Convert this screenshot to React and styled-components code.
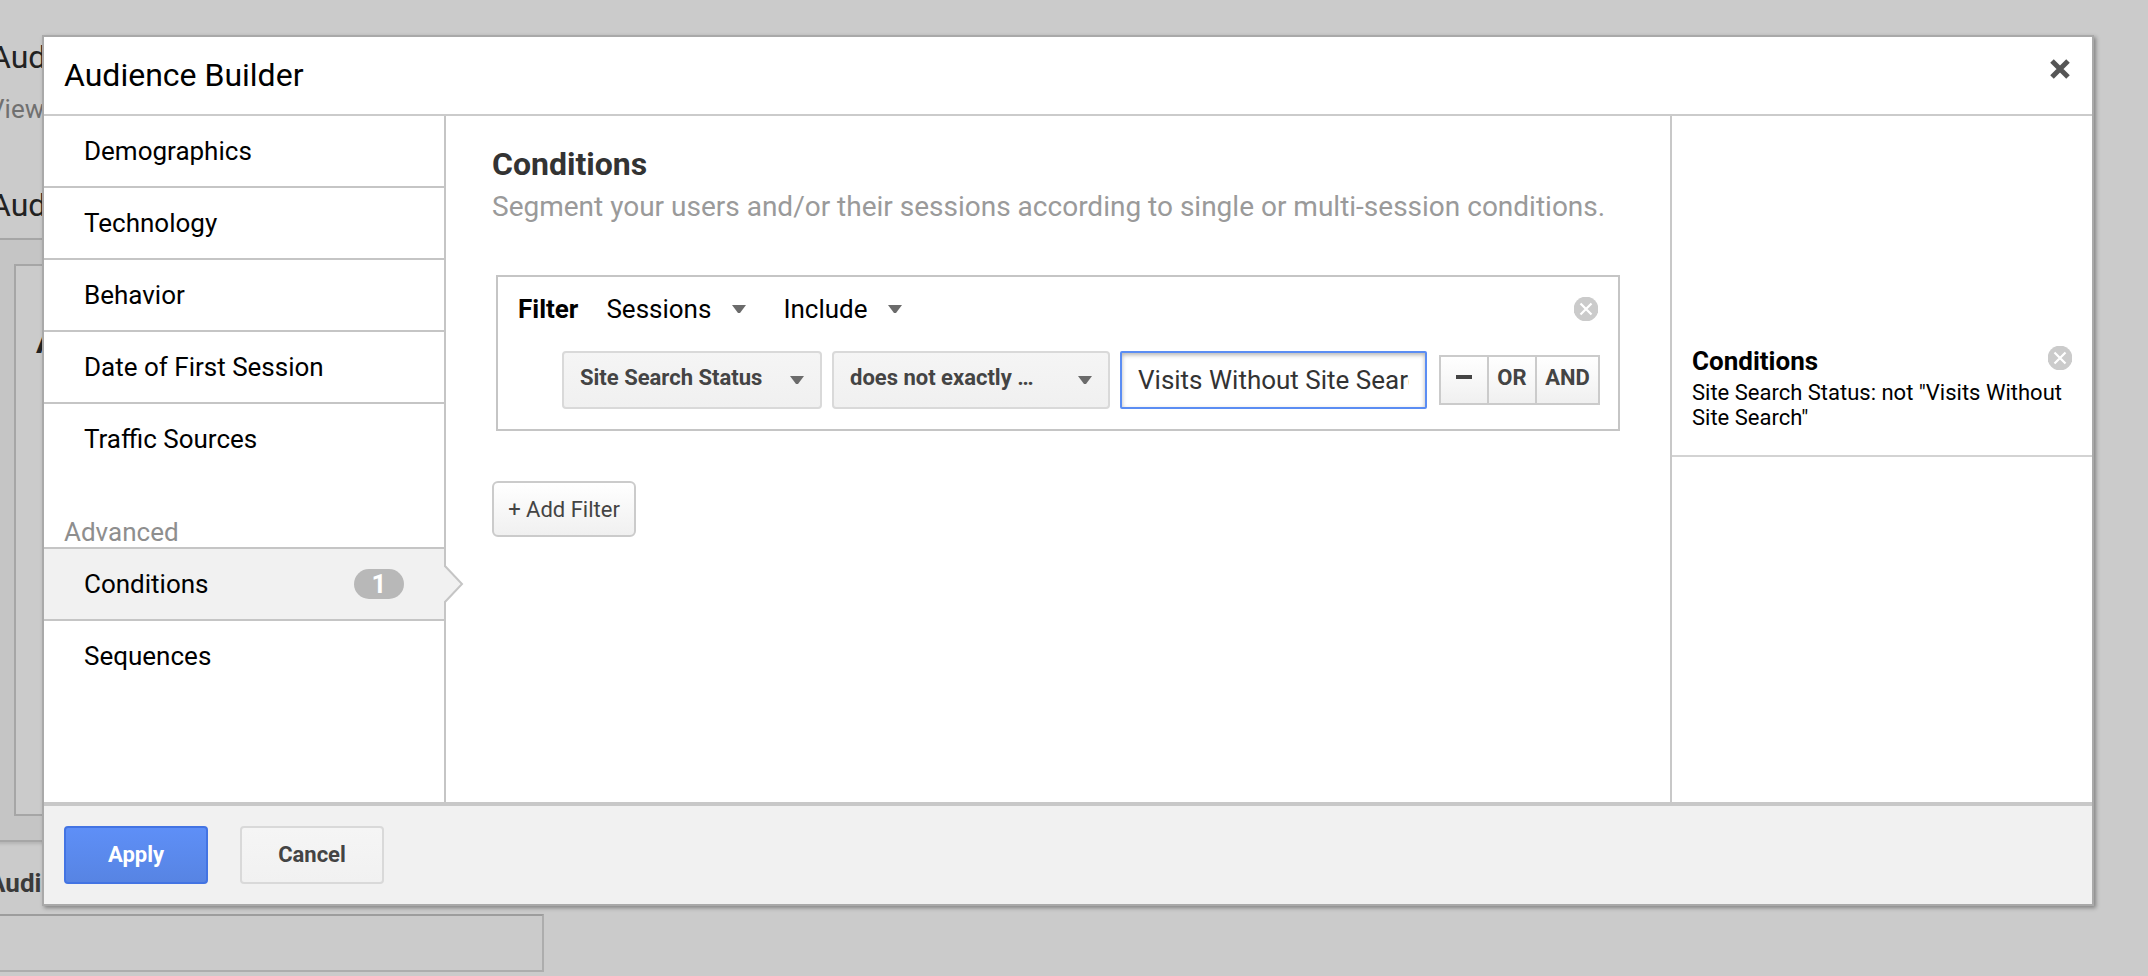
import React from "react";
import styled, { createGlobalStyle, css } from "styled-components";

const GlobalStyle = createGlobalStyle`
  *, *::before, *::after { box-sizing: border-box; }
  body {
    margin: 0;
    background: #cbcbcb;
    color: #000;
    font-family: Roboto, "Liberation Sans", sans-serif;
    font-size: 26px;
    line-height: 30px;
  }
  h1, h2, h3, p { margin: 0; }
  button, input, select { margin: 0; font-family: inherit; }
`;

/* ---------- page behind the dialog ---------- */

const Page = styled.div`
  min-height: 100vh;
  padding: 37px 72px 4px 0;
  margin-left: -12px;
  overflow: hidden;
`;

const PageHeading = styled.h2`
  padding-left: 2px;
  font-size: 32px;
  font-weight: 400;
  line-height: 40px;
  color: #222;
`;

const ViewName = styled.p`
  margin: 17px 0 61px;
  color: #707070;
`;

const PagePanel = styled.section`
  margin-top: 13px;
  padding: 24px 26px;
  border: solid #a6a6a6;
  border-width: 2px 0;
  background: #c5c5c5;
  box-shadow: 0 2px 3px rgba(0, 0, 0, 0.12);
`;

const PageCard = styled.div`
  min-height: 552px;
  padding: 58px 20px;
  border: 2px solid #a6a6a6;
  background: #cbcbcb;
  font-size: 32px;
  font-weight: 700;
  line-height: 36px;
  color: #222;
`;

const PageLabel = styled.label`
  display: block;
  margin: 26px 0 16px;
  font-weight: 700;
  color: #3a3a3a;
`;

const PageInput = styled.input`
  display: block;
  width: 556px;
  height: 58px;
  border: 2px solid #adadad;
  border-top-color: #9d9d9d;
  background: #cbcbcb;
`;

/* ---------- dialog frame ---------- */

const Overlay = styled.div`
  position: absolute;
  inset: 0;
  padding: 35px 54px 0 42px;
`;

const Dialog = styled.div`
  border: 2px solid #a9a9a9;
  background: #fff;
  box-shadow: 2px 2px 4px rgba(0, 0, 0, 0.35);
`;

const DialogHeader = styled.header`
  display: flex;
  justify-content: space-between;
  align-items: flex-start;
  padding: 18px 20px 19px;
  border-bottom: 2px solid #cbcbcb;
`;

const DialogTitle = styled.h1`
  font-size: 32px;
  font-weight: 400;
  line-height: 40px;
`;

const IconButton = styled.button`
  display: block;
  flex: none;
  width: 24px;
  height: 24px;
  padding: 0;
  border: 0;
  background: none;
  svg { display: block; }
`;

const CloseButton = styled(IconButton)`
  margin-top: 2px;
`;

const DialogBody = styled.div`
  display: flex;
`;

const DialogFooter = styled.footer`
  display: flex;
  gap: 32px;
  padding: 20px;
  border-top: 4px solid #c8c8c8;
  background: #f1f1f1;
`;

/* ---------- sidebar ---------- */

const Sidebar = styled.nav`
  flex: none;
  width: 402px;
  padding-bottom: 111px;
  border-right: 2px solid #c5c5c5;
`;

const NavList = styled.ul`
  margin: 0;
  padding: 0;
  list-style: none;
  li + li { border-top: 2px solid #c5c5c5; }
`;

const NavLink = styled.a`
  position: relative;
  display: flex;
  justify-content: space-between;
  align-items: center;
  height: 70px;
  padding: 0 40px;
  color: #000;
  text-decoration: none;
  ${({ $active }) => $active && css`background: #f1f1f1;`}
`;

const GroupLabel = styled.p`
  padding: 43px 20px 0;
  border-bottom: 2px solid #c5c5c5;
  color: #8e8e8e;
`;

const Badge = styled.span`
  width: 50px;
  border-radius: 15px;
  background: #b8b8b8;
  color: #fff;
  font-weight: 700;
  text-align: center;
`;

const Pointer = styled.svg`
  position: absolute;
  left: 100%;
  top: 16px;
`;

/* ---------- conditions editor ---------- */

const Main = styled.main`
  flex: 1;
  min-width: 0;
  padding: 28px 46px 0;
`;

const SectionTitle = styled.h2`
  font-size: 32px;
  line-height: 40px;
  color: #333;
`;

const Description = styled.p`
  margin-top: 7px;
  font-size: 28px;
  line-height: 32px;
  color: #9a9a9a;
`;

const FilterBox = styled.section`
  margin: 52px 4px 50px;
  padding: 17px 18px 20px 20px;
  border: 2px solid #c5c5c5;
`;

const FilterHeader = styled.div`
  display: flex;
  align-items: center;
  padding-right: 2px;
  ${IconButton} { margin-left: auto; }
`;

const FilterTitle = styled.h3`
  margin-right: 28px;
  font-size: 26px;
`;

const ConditionRow = styled.div`
  display: flex;
  align-items: center;
  gap: 10px;
  margin-top: 27px;
  padding-left: 44px;
`;

const SelectWrap = styled.span`
  display: grid;
  flex: none;
  align-items: center;
  width: ${({ $width }) => $width}px;
  margin-right: ${({ $after = 0 }) => $after}px;
  > * { grid-area: 1 / 1; }
  svg {
    justify-self: end;
    pointer-events: none;
    margin-right: ${({ $inset = 0 }) => $inset}px;
  }
`;

const PlainSelect = styled.select`
  width: 100%;
  height: 30px;
  padding: 0;
  border: 0;
  appearance: none;
  background: none;
  color: #000;
  font-size: 26px;
`;

const BoxSelect = styled.select`
  width: 100%;
  height: 58px;
  padding: 0 16px 6px;
  border: 2px solid #d9d9d9;
  border-radius: 4px;
  appearance: none;
  background: linear-gradient(#f5f5f5, #f0f0f0);
  color: #444;
  font-size: 22px;
  font-weight: 700;
`;

const ValueInput = styled.input`
  flex: 1;
  min-width: 0;
  height: 58px;
  padding: 0 16px;
  border: 2px solid #5b8df3;
  border-radius: 2px;
  outline: 0;
  background: #fff;
  box-shadow: inset 0 2px 4px rgba(0, 0, 0, 0.3);
  color: #333;
  font-size: 26px;
`;

const Operators = styled.div`
  display: flex;
  margin-left: 2px;
`;

const OperatorButton = styled.button`
  display: flex;
  align-items: center;
  justify-content: center;
  width: ${({ $wide }) => ($wide ? 65 : 50)}px;
  height: 50px;
  padding: 0 0 6px;
  border: 2px solid #cbcbcb;
  background: linear-gradient(#fff, #f0f0f0);
  color: #444;
  font-size: 22px;
  font-weight: 700;
  & + & { margin-left: -2px; }
`;

const AddButton = styled.button`
  width: 144px;
  height: 56px;
  padding: 0;
  border: 2px solid #cbcbcb;
  border-radius: 6px;
  background: linear-gradient(#fff, #f0f0f0);
  color: #444;
  font-size: 22px;
`;

const ActionButton = styled.button`
  width: 144px;
  height: 58px;
  padding: 0 0 2px;
  border: 2px solid ${({ $primary }) => ($primary ? "#4374e3" : "#d9d9d9")};
  border-radius: 4px;
  background: ${({ $primary }) =>
    $primary ? "linear-gradient(#5e8ff7, #5784e3)" : "linear-gradient(#f5f5f5, #f1f1f1)"};
  color: ${({ $primary }) => ($primary ? "#fff" : "#444")};
  font-size: 22px;
  font-weight: 700;
`;

/* ---------- summary ---------- */

const Summary = styled.aside`
  flex: none;
  width: 422px;
  padding-top: 230px;
  border-left: 2px solid #c8c8c8;
`;

const SummaryItem = styled.section`
  padding: 0 20px 25px;
  border-bottom: 2px solid #d3d3d3;
`;

const SummaryHeader = styled.div`
  display: flex;
  justify-content: space-between;
  align-items: flex-start;
`;

const SummaryTitle = styled.h2`
  font-size: 26px;
  line-height: 30px;
`;

const SummaryText = styled.p`
  margin-top: 4px;
  font-size: 22px;
  line-height: 25px;
`;

const Caret = () => (
  <svg width="14" height="8" viewBox="0 0 14 8" aria-hidden="true">
    <path d="M0 0H14L8 8H6Z" fill="#6b6b6b" />
  </svg>
);

const RemoveIcon = () => (
  <svg width="24" height="24" viewBox="0 0 24 24" aria-hidden="true">
    <circle cx="12" cy="12" r="12.400" fill="#cbcbcb" />
    <path d="M6.500 6.500L17.500 17.500M17.500 6.500L6.500 17.500" stroke="#fff" strokeWidth="2.200" />
  </svg>
);

const CloseIcon = () => (
  <svg width="24" height="24" viewBox="0 0 24 24" aria-hidden="true">
    <path d="M4 4L20 20M20 4L4 20" stroke="#555" strokeWidth="5" />
  </svg>
);

const MENU = ["Demographics", "Technology", "Behavior", "Date of First Session", "Traffic Sources"];

export default function App() {
  return (
    <>
      <GlobalStyle />
      <Page>
        <PageHeading>Aud</PageHeading>
        <ViewName>View</ViewName>
        <PageHeading>Aud</PageHeading>
        <PagePanel>
          <PageCard>A</PageCard>
        </PagePanel>
        <PageLabel htmlFor="audience-name">Audi</PageLabel>
        <PageInput id="audience-name" type="text" />
      </Page>

      <Overlay>
        <Dialog role="dialog" aria-labelledby="dialog-title">
          <DialogHeader>
            <DialogTitle id="dialog-title">Audience Builder</DialogTitle>
            <CloseButton type="button" aria-label="Close"><CloseIcon /></CloseButton>
          </DialogHeader>

          <DialogBody>
            <Sidebar>
              <NavList>
                {MENU.map((name) => (
                  <li key={name}><NavLink href="#">{name}</NavLink></li>
                ))}
              </NavList>
              <GroupLabel>Advanced</GroupLabel>
              <NavList>
                <li>
                  <NavLink href="#" $active aria-current="page">
                    Conditions
                    <Badge>1</Badge>
                    <Pointer width="20" height="38" viewBox="0 0 20 38" aria-hidden="true">
                      <path d="M0 1L18 19L0 37Z" fill="#f1f1f1" />
                      <path d="M1 0V1L18 19L1 37V38" fill="none" stroke="#c5c5c5" strokeWidth="2" />
                    </Pointer>
                  </NavLink>
                </li>
                <li><NavLink href="#">Sequences</NavLink></li>
              </NavList>
            </Sidebar>

            <Main>
              <SectionTitle>Conditions</SectionTitle>
              <Description>
                Segment your users and/or their sessions according to single or multi-session conditions.
              </Description>

              <FilterBox>
                <FilterHeader>
                  <FilterTitle>Filter</FilterTitle>
                  <SelectWrap $width={140} $after={37}>
                    <PlainSelect aria-label="Scope"><option>Sessions</option></PlainSelect>
                    <Caret />
                  </SelectWrap>
                  <SelectWrap $width={119}>
                    <PlainSelect aria-label="Mode"><option>Include</option></PlainSelect>
                    <Caret />
                  </SelectWrap>
                  <IconButton type="button" aria-label="Remove filter"><RemoveIcon /></IconButton>
                </FilterHeader>
                <ConditionRow>
                  <SelectWrap $width={260} $inset={18}>
                    <BoxSelect aria-label="Dimension"><option>Site Search Status</option></BoxSelect>
                    <Caret />
                  </SelectWrap>
                  <SelectWrap $width={278} $inset={18}>
                    <BoxSelect aria-label="Match type"><option>does not exactly …</option></BoxSelect>
                    <Caret />
                  </SelectWrap>
                  <ValueInput aria-label="Value" type="text" defaultValue="Visits Without Site Search" />
                  <Operators>
                    <OperatorButton type="button" aria-label="Remove condition">
                      <svg width="16" height="4" viewBox="0 0 16 4" aria-hidden="true">
                        <path d="M0 0H16V4H0Z" fill="#444" />
                      </svg>
                    </OperatorButton>
                    <OperatorButton type="button">OR</OperatorButton>
                    <OperatorButton type="button" $wide>AND</OperatorButton>
                  </Operators>
                </ConditionRow>
              </FilterBox>

              <AddButton type="button">+ Add Filter</AddButton>
            </Main>

            <Summary>
              <SummaryItem>
                <SummaryHeader>
                  <SummaryTitle>Conditions</SummaryTitle>
                  <IconButton type="button" aria-label="Remove conditions"><RemoveIcon /></IconButton>
                </SummaryHeader>
                <SummaryText>Site Search Status: not "Visits Without Site Search"</SummaryText>
              </SummaryItem>
            </Summary>
          </DialogBody>

          <DialogFooter>
            <ActionButton type="button" $primary>Apply</ActionButton>
            <ActionButton type="button">Cancel</ActionButton>
          </DialogFooter>
        </Dialog>
      </Overlay>
    </>
  );
}
